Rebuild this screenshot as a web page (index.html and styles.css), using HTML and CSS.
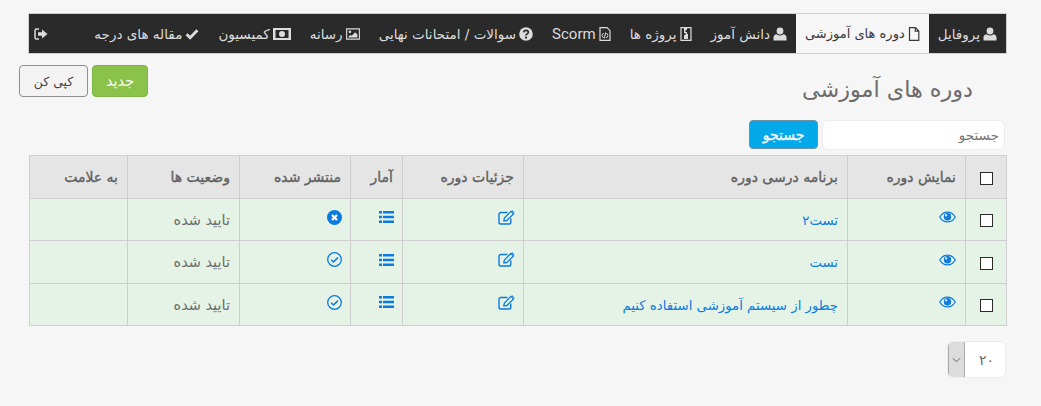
FILE: index.html
```html
<!DOCTYPE html>
<html lang="fa" dir="rtl">
<head>
<meta charset="utf-8">
<title>دوره های آموزشی</title>
<link rel="stylesheet" href="styles.css">
</head>
<body>
<svg class="defs" width="0" height="0" aria-hidden="true">
  <symbol id="i-user" viewBox="0 0 14 14"><circle cx="7" cy="4" r="3.4" fill="currentColor"/><path d="M0.5 13.5V10.5C0.5 8.6 2 7.2 3.6 7.2 4.6 8 5.7 8.4 7 8.4S9.4 8 10.4 7.2C12 7.2 13.5 8.6 13.5 10.5V13.5Z" fill="currentColor"/></symbol>
  <symbol id="i-file" viewBox="0 0 12 14"><path d="M1.5.7H7.5L10.8 4V13.3H1.5Z M7.3.9V4.2H10.6" fill="none" stroke="currentColor" stroke-width="1.2"/></symbol>
  <symbol id="i-zip" viewBox="0 0 12 14"><path d="M1 .7H11V13.3H1Z" fill="none" stroke="currentColor" stroke-width="1.2"/><path d="M4 1H7V3H5.500V5H7V7H8V12H4V8H5.500V6H4Z" fill="currentColor"/></symbol>
  <symbol id="i-code" viewBox="0 0 12 14"><path d="M1 .7H8L11 3.700V13.300H1Z" fill="none" stroke="currentColor" stroke-width="1.200"/><path d="M4.500 6L3 8.500 4.500 11M7.500 6L9 8.500 7.500 11M6.500 5.500L5.500 11.500" fill="none" stroke="currentColor"/></symbol>
  <symbol id="i-help" viewBox="0 0 14 14"><circle cx="7" cy="7" r="6.800" fill="currentColor"/><path d="M4.700 5.300C4.900 4 5.900 3.400 7 3.400 8.300 3.400 9.300 4.200 9.300 5.300 9.300 6.900 7 6.900 7 8.400" fill="none" stroke="#2b2a2b" stroke-width="1.700"/><rect x="6" y="9.600" width="2" height="1.900" fill="#2b2a2b"/></symbol>
  <symbol id="i-image" viewBox="0 0 16 13"><path d="M.7.7H15.300V12.300H.7Z" fill="none" stroke="currentColor" stroke-width="1.300"/><circle cx="4.500" cy="4" r="1.500" fill="currentColor"/><path d="M3 10.500V9L5 7.500 6.500 8.500 10.500 4.500 13 7V10.500Z" fill="currentColor"/></symbol>
  <symbol id="i-money" viewBox="0 0 18 12"><path d="M0 0H18V12H0Z M2.500 2V10H15.500V2Z" fill="currentColor" fill-rule="evenodd"/><circle cx="9" cy="6" r="3" fill="currentColor"/><path d="M0 3A3 3 0 0 0 3 0H0ZM18 3A3 3 0 0 1 15 0H18ZM0 9A3 3 0 0 1 3 12H0ZM18 9A3 3 0 0 0 15 12H18Z" fill="currentColor"/></symbol>
  <symbol id="i-check" viewBox="0 0 15 12"><path d="M1.700 6.200L5.500 10 13.300 2" fill="none" stroke="currentColor" stroke-width="3.100"/></symbol>
  <symbol id="i-signout" viewBox="0 0 14 12"><path d="M5 1H2.500C1.500 1 1 1.500 1 2.500V9.500C1 10.500 1.500 11 2.500 11H5" fill="none" stroke="currentColor" stroke-width="1.500"/><path d="M4 4.300H8V1.500L13.500 6 8 10.500V7.700H4Z" fill="currentColor"/></symbol>
  <symbol id="i-eye" viewBox="0 0 18 12"><path d="M.8 6C2.800 2.600 5.700.8 9 .8S15.200 2.600 17.200 6C15.200 9.400 12.300 11.200 9 11.200S2.800 9.400.8 6Z" fill="none" stroke="currentColor" stroke-width="1.300"/><circle cx="9" cy="5.700" r="3.900" fill="currentColor"/><circle cx="7.600" cy="4.300" r="1.200" fill="#e4f3e5"/></symbol>
  <symbol id="i-edit" viewBox="0 0 17 15"><path d="M9.500 2.500H2.800C1.800 2.500 1 3.300 1 4.300V12.200C1 13.200 1.800 14 2.800 14H11C12 14 12.800 13.200 12.800 12.200V8.500" fill="none" stroke="currentColor" stroke-width="1.400"/><path d="M5.800 10.700L6.400 8 13 1.400 15.500 3.900 8.900 10.500Z" fill="none" stroke="currentColor" stroke-width="1.300"/><path d="M13.500.8L14.300.3 16.500 2.500 16 3.300Z" fill="currentColor"/></symbol>
  <symbol id="i-list" viewBox="0 0 15 12"><path d="M0 0H3V2.400H0ZM4 0H15V2.400H4ZM0 4.800H3V7.200H0ZM4 4.800H15V7.200H4ZM0 9.600H3V12H0ZM4 9.600H15V12H4Z" fill="currentColor"/></symbol>
  <symbol id="i-x" viewBox="0 0 15 15"><circle cx="7.500" cy="7.500" r="7.500" fill="currentColor"/><path d="M5 5L10 10M10 5L5 10" stroke="#fff" stroke-width="2.200"/></symbol>
  <symbol id="i-ok" viewBox="0 0 15 15"><circle cx="7.500" cy="7.500" r="6.800" fill="none" stroke="currentColor" stroke-width="1.300"/><path d="M4.200 7.700L6.500 10 10.900 5.600" fill="none" stroke="currentColor" stroke-width="1.500"/></symbol>
</svg>

<nav class="tabs">
  <a class="tab first"><svg class="ico w14"><use href="#i-user"/></svg>پروفایل</a>
  <a class="tab active"><svg class="ico w12"><use href="#i-file"/></svg>دوره های آموزشی</a>
  <a class="tab"><svg class="ico w14"><use href="#i-user"/></svg>دانش آموز</a>
  <a class="tab"><svg class="ico w12"><use href="#i-zip"/></svg>پروژه ها</a>
  <a class="tab"><svg class="ico w12"><use href="#i-code"/></svg><span class="latin">Scorm</span></a>
  <a class="tab"><svg class="ico w14"><use href="#i-help"/></svg>سوالات / امتحانات نهایی</a>
  <a class="tab"><svg class="ico w14"><use href="#i-image"/></svg>رسانه</a>
  <a class="tab"><svg class="ico w18"><use href="#i-money"/></svg>کمیسیون</a>
  <a class="tab"><svg class="ico w14"><use href="#i-check"/></svg>مقاله های درجه</a>
  <a class="tab logout"><svg class="ico w14"><use href="#i-signout"/></svg></a>
</nav>

<header class="head">
  <h1 class="title">دوره های آموزشی</h1>
  <div class="actions">
    <button class="btn btn-new">جدید</button>
    <button class="btn btn-copy">کپی کن</button>
  </div>
</header>

<form class="search">
  <input class="search-input" type="text" placeholder="جستجو">
  <button class="btn btn-search" type="button">جستجو</button>
</form>

<table class="grid">
  <colgroup>
    <col class="c1"><col class="c2"><col class="c3"><col class="c4"><col class="c5"><col class="c6"><col class="c7"><col class="c8">
  </colgroup>
  <thead>
    <tr>
      <th class="cb"><span class="box"></span></th>
      <th>نمایش دوره</th>
      <th>برنامه درسی دوره</th>
      <th>جزئیات دوره</th>
      <th>آمار</th>
      <th>منتشر شده</th>
      <th>وضعیت ها</th>
      <th>به علامت</th>
    </tr>
  </thead>
  <tbody>
    <tr>
      <td class="cb"><span class="box"></span></td>
      <td><svg class="act eye"><use href="#i-eye"/></svg></td>
      <td><a class="link">تست۲</a></td>
      <td><svg class="act edit"><use href="#i-edit"/></svg></td>
      <td><svg class="act list"><use href="#i-list"/></svg></td>
      <td><svg class="act round"><use href="#i-x"/></svg></td>
      <td>تایید شده</td>
      <td></td>
    </tr>
    <tr>
      <td class="cb"><span class="box"></span></td>
      <td><svg class="act eye"><use href="#i-eye"/></svg></td>
      <td><a class="link">تست</a></td>
      <td><svg class="act edit"><use href="#i-edit"/></svg></td>
      <td><svg class="act list"><use href="#i-list"/></svg></td>
      <td><svg class="act round"><use href="#i-ok"/></svg></td>
      <td>تایید شده</td>
      <td></td>
    </tr>
    <tr>
      <td class="cb"><span class="box"></span></td>
      <td><svg class="act eye"><use href="#i-eye"/></svg></td>
      <td><a class="link">چطور از سیستم آموزشی استفاده کنیم</a></td>
      <td><svg class="act edit"><use href="#i-edit"/></svg></td>
      <td><svg class="act list"><use href="#i-list"/></svg></td>
      <td><svg class="act round"><use href="#i-ok"/></svg></td>
      <td>تایید شده</td>
      <td></td>
    </tr>
  </tbody>
</table>

<div class="pager">
  <div class="select">
    <span class="select-value">۲۰</span>
    <span class="select-arrow"><svg class="chev" viewBox="0 0 10 6"><path d="M1 1L5 5 9 1" fill="none" stroke="currentColor" stroke-width="1"/></svg></span>
  </div>
</div>
</body>
</html>
```
FILE: styles.css
```css
* { box-sizing: border-box; }
html, body { margin: 0; height: 100%; }
body {
  background: #f6f6f6;
  color: #6c6c6c;
  font-family: "DejaVu Sans", sans-serif;
  font-size: 13px;
  padding: 13px 34px 0 19px;
  overflow: hidden;
}
.defs { position: absolute; }

.tabs {
  display: flex;
  height: 41px;
  width: 979px;
  background: #2b2a2b;
  border: 1px solid #d0d0d0;
}
.tab {
  display: flex;
  align-items: center;
  gap: 3px;
  padding: 0 9px;
  margin-left: 1px;
  color: #dcdcdc;
  font-size: 13.5px;
  white-space: nowrap;
}
.tab.first { margin-left: 0; }
.tab.active {
  background: #f6f6f6;
  color: #3a3a3a;
  margin-left: 0;
  font-size: 13px;
}
.latin { font-family: Roboto, sans-serif; font-size: 15px; }
.logout { margin-right: auto; margin-left: 0; padding: 0 6px 0 5px; }
.ico { height: 14px; flex: none; color: #dcdcdc; }
.active .ico { color: #3a3a3a; }
.w12 { width: 12px; }
.w14 { width: 14px; }
.w18 { width: 18px; }

.head {
  display: flex;
  justify-content: space-between;
  height: 66px;
}
.title {
  margin: 21px 34px 0 0;
  font-size: 22.3px;
  font-weight: 400;
  line-height: 28px;
  color: #6c6c6c;
}
.actions {
  display: flex;
  gap: 4px;
  margin-top: 11px;
  height: 32px;
}
.btn {
  font-family: "DejaVu Sans", sans-serif;
  border-radius: 4px;
  cursor: pointer;
}
.btn-new {
  width: 56px;
  background: #8bc34a;
  border: 1px solid #7fb544;
  color: #fff;
  font-size: 14.5px;
}
.btn-copy {
  width: 69px;
  background: #f3f3f3;
  border: 1px solid #8f8f8f;
  color: #444;
  font-size: 12.5px;
}

.search {
  display: flex;
  gap: 4px;
  height: 30px;
  width: 256px;
  margin-right: 2px;
}
.search-input {
  width: 183px;
  height: 30px;
  border: 1px solid #ececec;
  border-radius: 6px;
  background: #fff;
  padding: 0 5px;
  font-family: "DejaVu Sans", sans-serif;
  font-size: 13.5px;
}
.search-input::placeholder { color: #757575; opacity: 1; }
.btn-search {
  width: 69px;
  height: 29px;
  background: #03a9e8;
  border: 1px solid #6c8fa3;
  color: #fff;
  font-size: 14px;
  -webkit-text-stroke: 0.3px #fff;
}

.grid {
  border-collapse: collapse;
  table-layout: fixed;
  width: 977px;
  margin-top: 5px;
}
.c1 { width: 41px; }
.c2 { width: 118px; }
.c3 { width: 324px; }
.c4 { width: 121px; }
.c5 { width: 52px; }
.c6 { width: 111px; }
.c7 { width: 112px; }
.c8 { width: 98px; }
.grid th, .grid td {
  border: 1px solid #cfcfcf;
  text-align: right;
  padding: 0 9px;
  vertical-align: middle;
}
.grid th {
  height: 43px;
  background: #e5e5e5;
  color: #616161;
  font-size: 14px;
  font-weight: 400;
  -webkit-text-stroke: 0.35px #616161;
}
.grid td {
  height: 42px;
  background: #e4f3e5;
  font-size: 14.5px;
  color: #6c6c6c;
}
.grid tbody tr:nth-child(2) td { height: 43px; }
.grid .cb { text-align: center; padding: 5px 0 0; }
.box {
  display: inline-block;
  width: 13px;
  height: 13px;
  border: 1px solid #2b2b2b;
  background: #fff;
}
.link { color: #0a7be0; font-size: 13.3px; }
.act { display: block; color: #0a7be0; }
.eye { width: 17px; height: 12px; margin-top: -5px; }
.edit { width: 17px; height: 15px; margin: -5px -1px 0 0; }
.list { width: 15px; height: 12px; margin: -5px -1px 0 0; }
.round { width: 15px; height: 15px; margin: -5px -1px 0 0; }

.pager {
  display: flex;
  margin-top: 15px;
  margin-right: 1px;
}
.select {
  display: flex;
  width: 59px;
  height: 37px;
  border: 1px solid #ececec;
  border-radius: 6px;
  background: #fff;
  overflow: hidden;
}
.select-value {
  flex: 1;
  display: flex;
  align-items: center;
  justify-content: center;
  padding-left: 3px;
  font-size: 14px;
}
.select-arrow {
  width: 17px;
  display: flex;
  align-items: center;
  justify-content: center;
  background: #dcdcdc;
  border-left: 1px solid #aaa;
  border-right: 1px solid #aaa;
  color: #555;
}
.chev { width: 9px; height: 6px; }
```
